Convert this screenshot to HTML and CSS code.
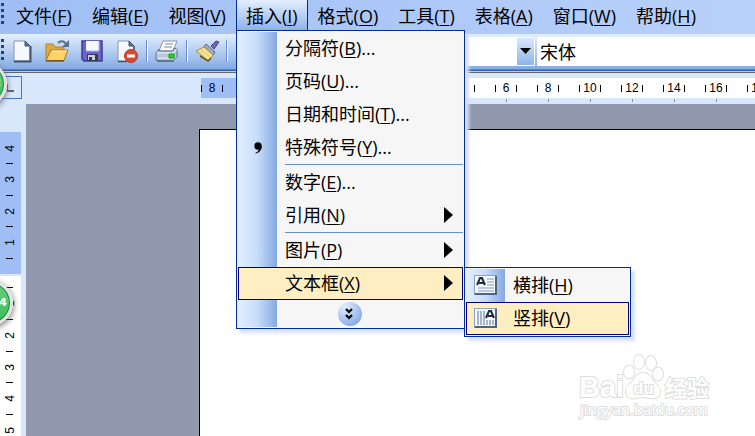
FILE: index.html
```
<!DOCTYPE html>
<html lang="zh-CN">
<head>
    <meta charset="UTF-8">
    <meta name="viewport" content="width=device-width, initial-scale=1.0">
    <title>文档编辑器</title>
    <link rel="stylesheet" href="styles.css">
</head>
<body>
    <nav class="menubar">
        <span class="grip"></span>
        <button class="menu-title">文件(<u>F</u>)</button>
        <button class="menu-title">编辑(<u>E</u>)</button>
        <button class="menu-title">视图(<u>V</u>)</button>
        <div class="menu-open">
            <button class="menu-title active">插入(<u>I</u>)</button>
            <div class="menu">
                <button class="item">分隔符(<u>B</u>)...</button>
                <button class="item">页码(<u>U</u>)...</button>
                <button class="item">日期和时间(<u>T</u>)...</button>
                <button class="item">
                    <svg class="item-icon comma" width="8" height="12" viewBox="0 0 8 12"><circle cx="4" cy="4" r="3.7"/><path d="M7.7 4C8 8 5 11 1.500 11.700V11C4 10 5 8 4.800 6z"/></svg>
                    特殊符号(<u>Y</u>)...
                </button>
                <hr class="line">
                <button class="item">数字(<u>E</u>)...</button>
                <button class="item has-sub">引用(<u>N</u>)</button>
                <hr class="line">
                <button class="item has-sub">图片(<u>P</u>)</button>
                <div class="sub-wrap">
                    <button class="item has-sub selected">文本框(<u>X</u>)</button>
                    <div class="menu submenu">
                        <button class="item">
                            <svg class="item-icon" width="23" height="20" viewBox="0 0 23 20">
                                <rect x=".5" y=".5" width="22" height="19" fill="#f4f8ff" stroke="#8fa2bd"/>
                                <path d="M1 19h21V1" fill="none" stroke="#50647f" stroke-width="2"/>
                                <path d="M13 4h7M13 7h7M13 10h7M4 13h16M4 16h16" stroke="#a9b8d2" stroke-width="1.500"/>
                                <path d="M3 10L6 3h2l3 7M5 8h5" fill="none" stroke="#222b3a" stroke-width="2"/>
                            </svg>
                            横排(<u>H</u>)
                        </button>
                        <button class="item selected">
                            <svg class="item-icon" width="23" height="20" viewBox="0 0 23 20">
                                <rect x=".5" y=".5" width="22" height="19" fill="#f4f8ff" stroke="#8fa2bd"/>
                                <path d="M1 19h21V1" fill="none" stroke="#50647f" stroke-width="2"/>
                                <path d="M4 3v14M7 3v14M10 3v14M13 12v5M16 12v5M19 12v5" stroke="#8fa0bd" stroke-width="1.500"/>
                                <path d="M12 10l3-7h2l3 7M14 8h5" fill="none" stroke="#222b3a" stroke-width="2"/>
                            </svg>
                            竖排(<u>V</u>)
                        </button>
                    </div>
                </div>
                <button class="expand" aria-label="展开菜单">
                    <svg width="24" height="24" viewBox="0 0 24 24">
                        <defs><radialGradient id="ball" cx=".3" cy=".2" r=".9"><stop offset="0" stop-color="#e2eeff"/><stop offset="1" stop-color="#80a7e4"/></radialGradient></defs>
                        <circle cx="12" cy="12" r="12" fill="url(#ball)"/>
                        <path d="M8 7l3 3 3-3M8 13l3 3 3-3" fill="none" stroke="#000" stroke-width="2.200"/>
                    </svg>
                </button>
            </div>
        </div>
        <button class="menu-title">格式(<u>O</u>)</button>
        <button class="menu-title">工具(<u>T</u>)</button>
        <button class="menu-title">表格(<u>A</u>)</button>
        <button class="menu-title">窗口(<u>W</u>)</button>
        <button class="menu-title">帮助(<u>H</u>)</button>
    </nav>

    <div class="toolbar">
        <span class="grip"></span>
        <div class="tools">
            <button class="tool" aria-label="新建">
                <svg width="24" height="24" viewBox="0 0 24 24">
                    <path d="M4 2h11l5 5v15H4z" fill="#f5f8fc" stroke="#8795ab"/>
                    <path d="M4 22.500h16.500V7" fill="none" stroke="#3f5370" stroke-width="2"/>
                    <path d="M15 2v5h5z" fill="#5c7392" stroke="#3f5370"/>
                </svg>
            </button>
            <button class="tool" aria-label="打开">
                <svg width="24" height="24" viewBox="0 0 24 24">
                    <path d="M1 21V5h7l2 3h9v4" fill="#e0a93f" stroke="#b08436"/>
                    <path d="M1 21.500L6 11h17l-4 10.500z" fill="#fbd367" stroke="#a87422"/>
                    <path d="M7 12h15" stroke="#fff0b0"/>
                    <path d="M1 22h18" stroke="#4d3516"/>
                    <path d="M13 4c3-3 6-2 8 1" fill="none" stroke="#58718f" stroke-width="2"/>
                    <path d="M24 1v7h-7z" fill="#58718f"/>
                </svg>
            </button>
            <button class="tool" aria-label="保存">
                <svg width="24" height="24" viewBox="0 0 24 24">
                    <path d="M2 2h20v20H4l-2-2z" fill="#6966cb" stroke="#40389a" stroke-width="1.500"/>
                    <path d="M6 2h13v10H6z" fill="#f5f8ff"/>
                    <path d="M19 2v10H6" fill="none" stroke="#aab5dc"/>
                    <path d="M7 15h11v7H7z" fill="#353a4e"/>
                    <path d="M8 16h7v5H8z" fill="#c8cfdc"/>
                    <path d="M9 18h3v3H9z" fill="#343850"/>
                </svg>
            </button>
            <button class="tool" aria-label="权限">
                <svg width="24" height="24" viewBox="0 0 24 24">
                    <path d="M3 2h11l5 5v15H3z" fill="#f5f8fc" stroke="#8795ab"/>
                    <path d="M3 22.500h9M19 7v5" fill="none" stroke="#3f5370" stroke-width="1.500"/>
                    <path d="M14 2v5h5z" fill="#5c7392" stroke="#3f5370"/>
                    <circle cx="16" cy="17" r="6.500" fill="#dc4a2e" stroke="#b2381f"/>
                    <path d="M12 17h8" stroke="#fff" stroke-width="3"/>
                </svg>
            </button>
        </div>
        <span class="divider"></span>
        <button class="tool" aria-label="打印">
            <svg width="24" height="24" viewBox="0 0 24 24">
                <path d="M8 2h14l-4 10H4z" fill="#fcfdff" stroke="#8794aa"/>
                <path d="M10 5h8M9 8h8" stroke="#7587a3"/>
                <path d="M4 10L1 14v7l3 1h14l4-4v-8l-3-1-1 3H4z" fill="#b9c6da" stroke="#637590"/>
                <path d="M2 14h16l4-4M3 19h15" fill="none" stroke="#eef4fb"/>
                <path d="M2 22h17" stroke="#40506a"/>
                <path d="M14 15h5v4h-5z" fill="#1bdd19" stroke="#159b1d"/>
            </svg>
        </button>
        <span class="divider"></span>
        <button class="tool" aria-label="格式刷">
            <svg width="24" height="24" viewBox="0 0 24 24">
                <path d="M16 7l5-5 3 1-5 7z" fill="#6d65b5" stroke="#48438e"/>
                <path d="M11 5l9 8-2 3-9-8z" fill="#a6adc0" stroke="#62677c"/>
                <path d="M9 8l9 8-5 6L1 12z" fill="#f4e493" stroke="#a58e42"/>
                <path d="M3 12l10 9M6 11l9 7" stroke="#d8c67a"/>
                <path d="M5 17l8 5 3-3" fill="none" stroke="#6c5620" stroke-width="1.500"/>
            </svg>
        </button>
        <span class="divider"></span>
        <button class="tool" aria-label="撤消">
            <svg width="24" height="24" viewBox="0 0 24 24"><path d="M1 4v9h9L8 10c4-3 8-1 9 5l3 1C20 5 11 2 5 7z" fill="#4b7fd8"/></svg>
        </button>
        <select class="combo style-combo" aria-label="样式"><option></option></select>
        <select class="combo font-combo" aria-label="字体"><option>宋体</option></select>
    </div>

    <div class="ruler-row">
        <button class="tab-stop" aria-label="制表符"><span class="tab-mark"></span></button>
        <div class="ruler">
            <span class="mark">8</span>
            <span class="mark"></span>
            <span class="mark"></span>
            <span class="mark"></span>
            <span class="mark"></span>
            <span class="mark"></span>
            <span class="mark"></span>
            <span class="mark notch">6</span>
            <span class="mark notch">8</span>
            <span class="mark notch">10</span>
            <span class="mark notch">12</span>
            <span class="mark notch">14</span>
            <span class="mark notch">16</span>
            <span class="mark notch">18</span>
        </div>
    </div>

    <main class="workspace">
        <div class="side-ruler">
            <div class="side-part margin-part">
                <span>4</span><i></i>
                <span>3</span><i></i>
                <span>2</span><i></i>
                <span>1</span><i></i>
            </div>
            <div class="side-part text-part">
                <i></i><span>1</span>
                <i></i><span>2</span>
                <i></i><span>3</span>
                <i></i><span>4</span>
                <i></i><span>5</span>
            </div>
        </div>
        <div class="desk">
            <div class="page"></div>
        </div>
    </main>

    <div class="badge badge-top">3</div>
    <div class="badge badge-side">4</div>

    <svg class="watermark" width="140" height="70" viewBox="0 0 140 70">
        <g class="wm-shapes">
            <ellipse cx="53" cy="18" rx="5" ry="6.500"/>
            <ellipse cx="63" cy="8" rx="5" ry="7"/>
            <ellipse cx="75" cy="9" rx="5" ry="7"/>
            <ellipse cx="82" cy="20" rx="5" ry="6.500"/>
            <path d="M67 19c-6 0-8 5-11 9-4 3-7 6-6 11 1 5 6 6 10 5 4-1 9-1 14 0 5 1 9 0 10-5 1-5-3-8-6-11-3-4-5-9-11-9z"/>
            <text class="wm-name" x="3" y="43">Bai</text>
            <text class="wm-du" x="57" y="40">du</text>
            <text class="wm-cn" x="89" y="42">经验</text>
            <text class="wm-url" x="4" y="61">jingyan.baidu.com</text>
        </g>
    </svg>
</body>
</html>
```
FILE: styles.css
```
* {
    box-sizing: border-box;
}
body {
    display: flex;
    flex-direction: column;
    height: 100vh;
    margin: 0;
    overflow: hidden;
    font-family: "Open Sans", "Noto Sans CJK SC", sans-serif;
    font-size: 18px;
    color: #000;
    background-color: #d8e7fc;
}
button {
    flex-shrink: 0;
    padding: 0;
    border: none;
    background: none;
    font: inherit;
    color: inherit;
    white-space: nowrap;
}
u {
    text-decoration-thickness: 1px;
    text-underline-offset: 2px;
}

/* menu bar */
.menubar {
    display: flex;
    height: 34px;
    flex-shrink: 0;
    background: linear-gradient(to right, #9ebef5, #b9d1fa);
}
.grip {
    flex-shrink: 0;
    width: 3px;
    height: 22px;
    margin: 3px 2px 0 1px;
    background: repeating-linear-gradient(#27417b 0 3px, transparent 3px 6px);
}
.menu-title {
    height: 31px;
    padding: 0 10px;
    line-height: 30px;
}
.menu-open {
    position: relative;
}
.menu-title.active {
    border: 1px solid #002d96;
    border-width: 0 1px;
    padding: 0 9px;
    background: linear-gradient(#e3efff, #8bb0e8);
}

/* drop-down menus */
.menu {
    position: absolute;
    z-index: 2;
    top: 30px;
    left: 0;
    width: 229px;
    padding: 1px;
    border: 1px solid #002d96;
    background: linear-gradient(to right, #e3efff, #c8ddfa 50%, #84aae3) 0 1px / 40px calc(100% - 2px) no-repeat #f6f6f6;
    box-shadow: 4px 4px 3px #d5e0fb;
}
.item {
    position: relative;
    display: block;
    width: 100%;
    height: 33px;
    padding-left: 46px;
    border: 1px solid transparent;
    line-height: 31px;
    text-align: left;
}
.item.selected {
    border-color: #000080;
    background-color: #ffeec2;
}
.item-icon {
    position: absolute;
    top: 5px;
    left: 7px;
}
.comma {
    top: 10px;
    left: 15px;
}
.has-sub::after {
    content: "";
    position: absolute;
    top: 7px;
    right: 9px;
    border: 8px solid transparent;
    border-left: 9px solid #000;
    border-right: none;
}
.line {
    height: 1px;
    margin: 0 0 1px 47px;
    border: none;
    background-color: #6a8ccb;
}
.sub-wrap {
    position: relative;
}
.submenu {
    top: 0;
    left: 226px;
    width: 167px;
}
.expand {
    display: block;
    width: 100%;
    height: 27px;
    line-height: 0;
}

/* toolbar */
.toolbar {
    display: flex;
    flex-shrink: 0;
    height: 39px;
    border-bottom: 1px solid #666;
    background: linear-gradient(#e3efff, #84abe3 35px, #2f5fb0 36px 37px, #b9d0f3 37px);
}
.toolbar .grip {
    margin: 5px 6px 0 1px;
}
.tools {
    display: flex;
    gap: 11px;
}
.tool {
    width: 24px;
    height: 34px;
    line-height: 0;
}
.divider {
    flex-shrink: 0;
    width: 2px;
    height: 22px;
    margin: 6px 7px 0;
    border-left: 1px solid #6a8ccb;
    border-right: 1px solid #f4f8ff;
}
.combo {
    height: 29px;
    margin: 3px 2px 0 0;
    padding: 0 3px;
    border: none;
    border-radius: 0;
    appearance: none;
    background-color: #fff;
    font: inherit;
    color: inherit;
}
.style-combo {
    width: 195px;
    margin-left: 81px;
    background-image: url("data:image/svg+xml,%3Csvg xmlns='http://www.w3.org/2000/svg' width='11' height='6'%3E%3Cpath d='M0 0h11L5.500 6z'/%3E%3C/svg%3E"), linear-gradient(#d9e8fd, #8fb4ea);
    background-size: 11px 6px, 17px 27px;
    background-position: right 4px top 11px, right 1px top 1px;
    background-repeat: no-repeat;
}
.font-combo {
    flex: 1;
    margin-right: 0;
}

/* rulers */
.ruler-row {
    display: flex;
    flex-shrink: 0;
    height: 31px;
    font: 12px "Liberation Sans", sans-serif;
}
.tab-stop {
    width: 22px;
    height: 23px;
    margin-top: 3px;
    border: 1px solid #4673ca;
    border-left: none;
}
.tab-mark {
    display: block;
    width: 7px;
    height: 8px;
    margin-left: 7px;
    border: 2px solid #666;
    border-width: 0 0 2px 1px;
}
.ruler {
    display: flex;
    flex: 1;
    min-width: 0;
    height: 20px;
    margin: 5px 0 0 179px;
    background: linear-gradient(to right, #9ebef5 178px, #fff 178px);
}
.mark {
    display: flex;
    flex-shrink: 0;
    align-items: center;
    justify-content: space-between;
    width: 22px;
    margin-right: 20px;
}
.mark::before,
.mark::after {
    content: "";
    width: 1px;
    height: 7px;
    background-color: #000;
}
.notch {
    height: 24px;
    padding-bottom: 4px;
    background: linear-gradient(#8292ad, #8292ad) center bottom / 1px 3px no-repeat;
}
.workspace {
    display: flex;
    flex: 1;
    min-height: 0;
}
.side-ruler {
    width: 21px;
    margin-right: 5px;
    padding-top: 28px;
    font: 12px/12px "Liberation Sans", sans-serif;
}
.side-part {
    display: grid;
    grid-auto-rows: 1fr;
    place-items: center;
}
.side-part span {
    writing-mode: vertical-rl;
    transform: rotate(180deg);
}
.side-part i {
    width: 7px;
    height: 1px;
    background-color: #000;
}
.margin-part {
    height: 142px;
    padding: 8px 2px 8px 0;
    background-color: #9ebef5;
}
.text-part {
    height: 165px;
    margin-top: 2px;
    padding: 4px 2px 3px 0;
    background-color: #fff;
}

/* document */
.desk {
    display: flex;
    flex: 1;
    padding: 25px 0 0 173px;
    background-color: #9199ae;
}
.page {
    flex: 1;
    border: 1px solid #000;
    border-width: 1px 0 0 1px;
    background-color: #fff;
}

/* green counters on the window edge */
.badge {
    position: absolute;
    z-index: 3;
    width: 46px;
    height: 46px;
    padding-right: 3px;
    border: 3px solid #e2e2e2;
    border-radius: 50%;
    background: linear-gradient(#66d37d, #3cb957);
    box-shadow: 0 2px 6px #666, inset 0 0 0 1px #17834a;
    font: bold 11px/40px "DejaVu Sans", sans-serif;
    text-align: right;
    color: #fff;
}
.badge-top {
    top: 61px;
    left: -39px;
}
.badge-side {
    top: 280px;
    left: -33px;
}

.watermark {
    position: absolute;
    right: 39px;
    bottom: 12px;
}
.wm-shapes {
    fill: #fff;
    stroke: #dedede;
    stroke-width: 2px;
    paint-order: stroke;
}
.wm-name {
    font: bold 29px "Liberation Sans", sans-serif;
}
.wm-du {
    font: bold 17px "Liberation Sans", sans-serif;
}
.wm-cn {
    font: bold 22px "Noto Sans CJK SC", sans-serif;
}
.wm-url {
    font: 15px "Open Sans", sans-serif;
}
```
